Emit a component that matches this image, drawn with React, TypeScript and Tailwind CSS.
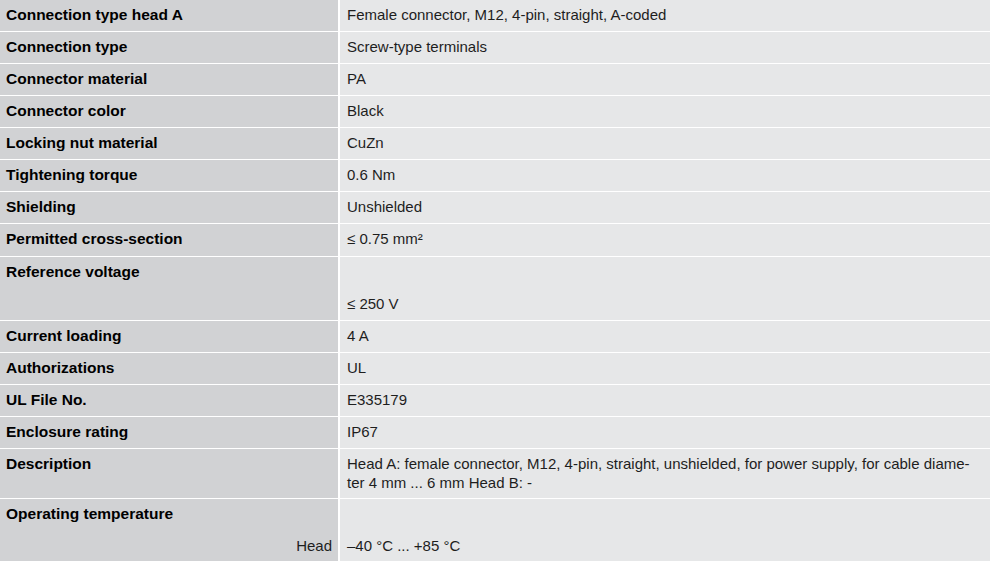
import React from "react";

type Row = {
  label: string;
  value: React.ReactNode;
  // value sits one line lower; label col may hold a sub-label
  split?: boolean;
  subLabel?: string;
  tight?: boolean;
  tall?: boolean;
};

const rows: Row[] = [
  { label: "Connection type head A", value: "Female connector, M12, 4-pin, straight, A-coded" },
  { label: "Connection type", value: "Screw-type terminals" },
  { label: "Connector material", value: "PA" },
  { label: "Connector color", value: "Black" },
  { label: "Locking nut material", value: "CuZn" },
  { label: "Tightening torque", value: "0.6 Nm" },
  { label: "Shielding", value: "Unshielded" },
  { label: "Permitted cross-section", value: <>≤ 0.75 mm²</>, tall: true },
  { label: "Reference voltage", value: <>≤ 250 V</>, split: true },
  { label: "Current loading", value: "4 A" },
  { label: "Authorizations", value: "UL" },
  { label: "UL File No.", value: "E335179" },
  { label: "Enclosure rating", value: "IP67" },
  {
    label: "Description",
    tight: true,
    value: (
      <>
        Head A: female connector, M12, 4-pin, straight, unshielded, for power supply, for cable diame-
        <br />
        ter 4 mm ... 6 mm Head B: -
      </>
    ),
  },
  { label: "Operating temperature", value: <>–40 °C ... +85 °C</>, split: true, subLabel: "Head" },
];

export default function App() {
  return (
    <div
      className="w-[992px] h-[561px] overflow-hidden bg-white text-[15px] leading-[20px]"
      style={{ fontFamily: '"Liberation Sans", Arial, sans-serif' }}
    >
      <div className="grid grid-cols-[338px_650px] gap-x-[2px] gap-y-[1px]">
        {rows.map((r) => (
          <React.Fragment key={r.label}>
            <div className="bg-[#d1d2d4] px-[6px] pt-[5px] pb-[6px] text-black">
              <div className="font-bold text-[15.5px]">{r.label}</div>
              {r.subLabel && (
                <div className="mt-[12px] text-right text-[#1e1e1e]">{r.subLabel}</div>
              )}
            </div>
            <div
              className={`bg-[#e6e7e8] px-[7px] pt-[5px] text-[#1e1e1e] ${
                r.tight ? "leading-[19px]" : ""
              } ${r.tall ? "pb-[7px]" : "pb-[6px]"}`}
            >
              {r.split && <div className="h-[32px]" />}
              <div>{r.value}</div>
            </div>
          </React.Fragment>
        ))}
      </div>
    </div>
  );
}
